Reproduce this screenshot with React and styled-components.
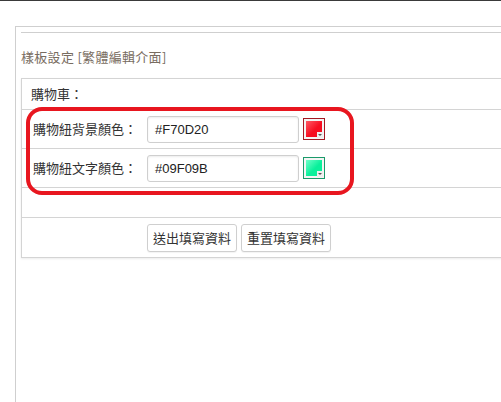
import React from 'react';
import styled, { createGlobalStyle } from 'styled-components';

const GlobalStyle = createGlobalStyle`
  html, body {
    margin: 0;
    padding: 0;
    background: #fff;
    overflow: hidden;
  }
  body {
    font-family: "Noto Sans CJK TC", "Noto Sans", sans-serif;
    font-size: 13px;
    color: #333;
  }
`;

const TopBar = styled.div`
  height: 1px;
  background: #3a3a3a;
`;

const Outer = styled.div`
  margin: 25px 0 0 15px;
  height: 376px;
  box-sizing: border-box;
  overflow: hidden;
  border-top: 1px solid #cfcfcf;
  border-left: 1px solid #cfcfcf;
  padding: 5px 0 0 5px;
`;

const InnerLine = styled.div`
  border-top: 1px solid #cfcfcf;
`;

const Title = styled.div`
  padding-top: 14px;
  margin-bottom: 11px;
  line-height: 20px;
  color: #786c60;
  font-size: 13px;
  letter-spacing: 0.3px;
`;

const Panel = styled.div`
  position: relative;
  width: 520px;
  border: 1px solid #d4d4d4;
  box-shadow: 0 1px 2px rgba(0, 0, 0, 0.08);
`;

const Row = styled.div`
  display: flex;
  align-items: center;
  height: ${(p) => p.h}px;
  padding-left: ${(p) => p.pad || 11}px;
  border-top: ${(p) => (p.first ? 'none' : '1px solid #d4d4d4')};
  box-sizing: border-box;
`;

const Label = styled.div`
  width: 114px;
  line-height: 20px;
`;

const Input = styled.div`
  width: 152px;
  height: 27px;
  box-sizing: border-box;
  border: 1px solid #cfcfcf;
  border-radius: 3px;
  box-shadow: inset 0 1px 2px rgba(0, 0, 0, 0.08);
  padding-left: 7px;
  display: flex;
  align-items: center;
  font-family: "Liberation Sans", Arial, sans-serif;
  font-size: 13px;
  color: #222;
`;

const Swatch = styled.div`
  position: relative;
  width: 22px;
  height: 22px;
  box-sizing: border-box;
  margin-left: 4px;
  border: 1px solid ${(p) => p.edge};
  padding: 2px;
  background: #f4f4f4;
`;

const SwatchFill = styled.div`
  width: 100%;
  height: 100%;
  background: linear-gradient(135deg, ${(p) => p.light} 0%, ${(p) => p.color} 55%);
`;

const Corner = styled.div`
  position: absolute;
  right: 1px;
  bottom: 1px;
  width: 6px;
  height: 6px;
  background: #eee;
  &::after {
    content: '';
    position: absolute;
    left: 1px;
    top: 2px;
    border-left: 2px solid transparent;
    border-right: 2px solid transparent;
    border-top: 2px solid #555;
  }
`;

const ButtonRow = styled(Row)`
  padding-left: 125px;
  gap: 4px;
`;

const Button = styled.button`
  height: 28px;
  padding: 0 5px;
  background: #fff;
  border: 1px solid #cfcfcf;
  border-radius: 3px;
  font-family: "Noto Sans CJK TC", sans-serif;
  font-size: 13px;
  color: #333;
  box-shadow: 0 1px 1px rgba(0, 0, 0, 0.05);
`;

const Highlight = styled.div`
  position: absolute;
  left: 4px;
  top: 28px;
  width: 328px;
  height: 88px;
  box-sizing: border-box;
  border: 4px solid #e8161f;
  border-radius: 16px;
  pointer-events: none;
`;

function ColorField({ label, value, color, light, edge }) {
  return (
    <Row h={39}>
      <Label>{label}</Label>
      <Input>{value}</Input>
      <Swatch edge={edge}>
        <SwatchFill color={color} light={light} />
        <Corner />
      </Swatch>
    </Row>
  );
}

export default function App() {
  return (
    <>
      <GlobalStyle />
      <TopBar />
      <Outer>
        <InnerLine />
        <Title>樣板設定 [繁體編輯介面]</Title>
        <Panel>
          <Row h={30} pad={9} first>
            <Label>購物車：</Label>
          </Row>
          <ColorField label="購物紐背景顏色：" value="#F70D20" color="#f70d20" light="#ff5a66" edge="#a31822" />
          <ColorField label="購物紐文字顏色：" value="#09F09B" color="#09f09b" light="#6dffc8" edge="#1a9a6a" />
          <Row h={30} />
          <ButtonRow h={40}>
            <Button>送出填寫資料</Button>
            <Button>重置填寫資料</Button>
          </ButtonRow>
          <Highlight />
        </Panel>
      </Outer>
    </>
  );
}
